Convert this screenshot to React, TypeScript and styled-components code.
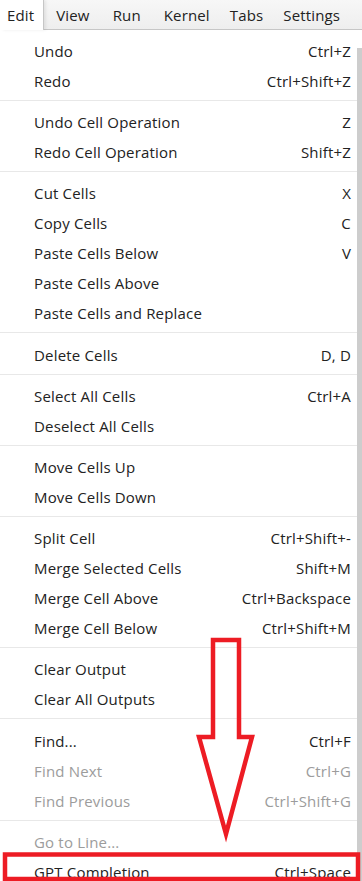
import React from "react";
import styled, { createGlobalStyle } from "styled-components";

const GlobalStyle = createGlobalStyle`
  html, body { margin: 0; padding: 0; background: #ffffff; }
  body { font-family: "Open Sans", "Noto Sans", "Liberation Sans", sans-serif; }
`;

const Page = styled.div`
  position: relative;
  width: 362px;
  height: 881px;
  overflow: hidden;
  background: #ffffff;
`;

const MenuBar = styled.div`
  display: flex;
  height: 29px;
  border-bottom: 1px solid #c6c6c6;
  background: linear-gradient(#f7f7f7, #eeeeee);
`;

const MenuTab = styled.div<{ $active?: boolean }>`
  display: flex;
  align-items: center;
  padding: 0 9px 0 7px;
  margin-right: 13px;
  font-size: 15px;
  letter-spacing: 0.15px;
  color: #222;
  background: #ffffff;
  height: 30px;
  box-shadow: 1px 0 0 #c6c6c6, 3px 0 3px rgba(0, 0, 0, 0.08);
  position: relative;
  z-index: 1;
`;

const Tabs = styled.div`
  display: flex;
  align-items: center;
`;

const TabLabel = styled.span<{ $gap: number }>`
  margin-left: ${(p) => p.$gap}px;
  font-size: 15px;
  letter-spacing: 0.15px;
  color: #222;
`;

const Body = styled.div`
  display: flex;
`;

const List = styled.div`
  flex: 1;
  padding-top: 6px;
`;

const ScrollTrack = styled.div`
  width: 5px;
  padding-top: 18px;
  display: flex;
  flex-direction: column;
`;

const Thumb = styled.div`
  flex: 1;
  background: #cdcdcd;
`;

const Item = styled.div<{ $disabled?: boolean }>`
  display: flex;
  align-items: center;
  justify-content: space-between;
  height: 30px;
  padding: 0 6px 0 34px;
  font-size: 15px;
  letter-spacing: 0.18px;
  color: ${(p) => (p.$disabled ? "#9c9c9c" : "#222")};
  white-space: nowrap;
`;

const Shortcut = styled.span``;

const Separator = styled.div`
  height: 1px;
  margin: 4px 0 6.2px;
  background: #e8e8e8;
`;

const Overlay = styled.svg`
  position: absolute;
  left: 0;
  top: 0;
  pointer-events: none;
`;

type Entry = { label: string; key?: string; disabled?: boolean } | "sep";

const entries: Entry[] = [
  { label: "Undo", key: "Ctrl+Z" },
  { label: "Redo", key: "Ctrl+Shift+Z" },
  "sep",
  { label: "Undo Cell Operation", key: "Z" },
  { label: "Redo Cell Operation", key: "Shift+Z" },
  "sep",
  { label: "Cut Cells", key: "X" },
  { label: "Copy Cells", key: "C" },
  { label: "Paste Cells Below", key: "V" },
  { label: "Paste Cells Above" },
  { label: "Paste Cells and Replace" },
  "sep",
  { label: "Delete Cells", key: "D, D" },
  "sep",
  { label: "Select All Cells", key: "Ctrl+A" },
  { label: "Deselect All Cells" },
  "sep",
  { label: "Move Cells Up" },
  { label: "Move Cells Down" },
  "sep",
  { label: "Split Cell", key: "Ctrl+Shift+-" },
  { label: "Merge Selected Cells", key: "Shift+M" },
  { label: "Merge Cell Above", key: "Ctrl+Backspace" },
  { label: "Merge Cell Below", key: "Ctrl+Shift+M" },
  "sep",
  { label: "Clear Output" },
  { label: "Clear All Outputs" },
  "sep",
  { label: "Find...", key: "Ctrl+F" },
  { label: "Find Next", key: "Ctrl+G", disabled: true },
  { label: "Find Previous", key: "Ctrl+Shift+G", disabled: true },
  "sep",
  { label: "Go to Line...", disabled: true },
  { label: "GPT Completion", key: "Ctrl+Space" },
];

const tabs = ["View", "Run", "Kernel", "Tabs", "Settings"];
const tabGaps = [0, 23, 23, 20, 20];

export default function App() {
  return (
    <Page>
      <GlobalStyle />
      <MenuBar>
        <MenuTab $active>Edit</MenuTab>
        <Tabs>
          {tabs.map((t, i) => (
            <TabLabel key={t} $gap={tabGaps[i]}>
              {t}
            </TabLabel>
          ))}
        </Tabs>
      </MenuBar>
      <Body>
        <List>
          {entries.map((e, i) =>
            e === "sep" ? (
              <Separator key={i} />
            ) : (
              <Item key={i} $disabled={e.disabled}>
                <span>{e.label}</span>
                {e.key && <Shortcut>{e.key}</Shortcut>}
              </Item>
            )
          )}
        </List>
        <ScrollTrack>
          <Thumb />
        </ScrollTrack>
      </Body>
      <Overlay width="362" height="881" viewBox="0 0 362 881">
        <polygon
          points="213,640 239,640 239,737 252,737 226,834 199,737 213,737"
          fill="none"
          stroke="#ed1c24"
          strokeWidth="4.5"
          strokeLinejoin="miter"
        />
        <rect x="5" y="854.5" width="353" height="24.5" fill="none" stroke="#ed1c24" strokeWidth="4.5" />
      </Overlay>
    </Page>
  );
}
